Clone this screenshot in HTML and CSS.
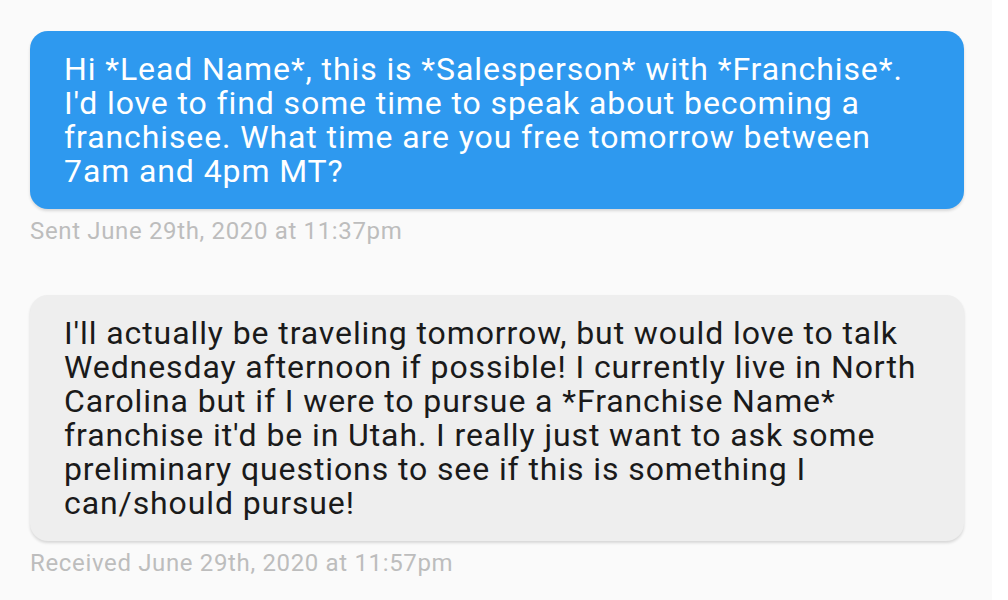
FILE: index.html
```html
<!DOCTYPE html>
<html>
<head>
<meta charset="utf-8">
<link rel="stylesheet" href="styles.css">
</head>
<body>
<div class="page">
  <div class="message">
    <div class="bubble bubble-sent">Hi *Lead Name*, this is *Salesperson* with *Franchise*. I'd love to find some time to speak about becoming a franchisee. What time are you free tomorrow between 7am and 4pm MT?</div>
    <div class="meta">Sent June 29th, 2020 at 11:37pm</div>
  </div>
  <div class="message">
    <div class="bubble bubble-received">I'll actually be traveling tomorrow, but would love to talk Wednesday afternoon if possible! I currently live in North Carolina but if I were to pursue a *Franchise Name* franchise it'd be in Utah. I really just want to ask some preliminary questions to see if this is something I can/should pursue!</div>
    <div class="meta">Received June 29th, 2020 at 11:57pm</div>
  </div>
</div>
</body>
</html>
```
FILE: styles.css
```css
html, body {
  margin: 0;
  padding: 0;
  background: #ffffff;
}
.page {
  width: 992px;
  height: 600px;
  box-sizing: border-box;
  background: #fafafa;
  padding: 31px 28px 0 30px;
  font-family: Roboto, "Noto Sans", sans-serif;
  display: flex;
  flex-direction: column;
  gap: 50px;
}
.message {
  display: flex;
  flex-direction: column;
}
.bubble {
  border-radius: 18px;
  padding: 21px 34px 21px 34px;
  font-size: 32px;
  line-height: 34px;
  letter-spacing: 0.9px;
  box-shadow: 0 2px 3px rgba(0, 0, 0, 0.14);
}
.bubble-sent {
  background: #2e99ef;
  color: #ffffff;
}
.bubble-received {
  background: #eeeeee;
  color: #1a1a1a;
}
.meta {
  margin-top: 8px;
  font-size: 24px;
  line-height: 28px;
  letter-spacing: 0.65px;
  color: #bdbdbd;
}
```
